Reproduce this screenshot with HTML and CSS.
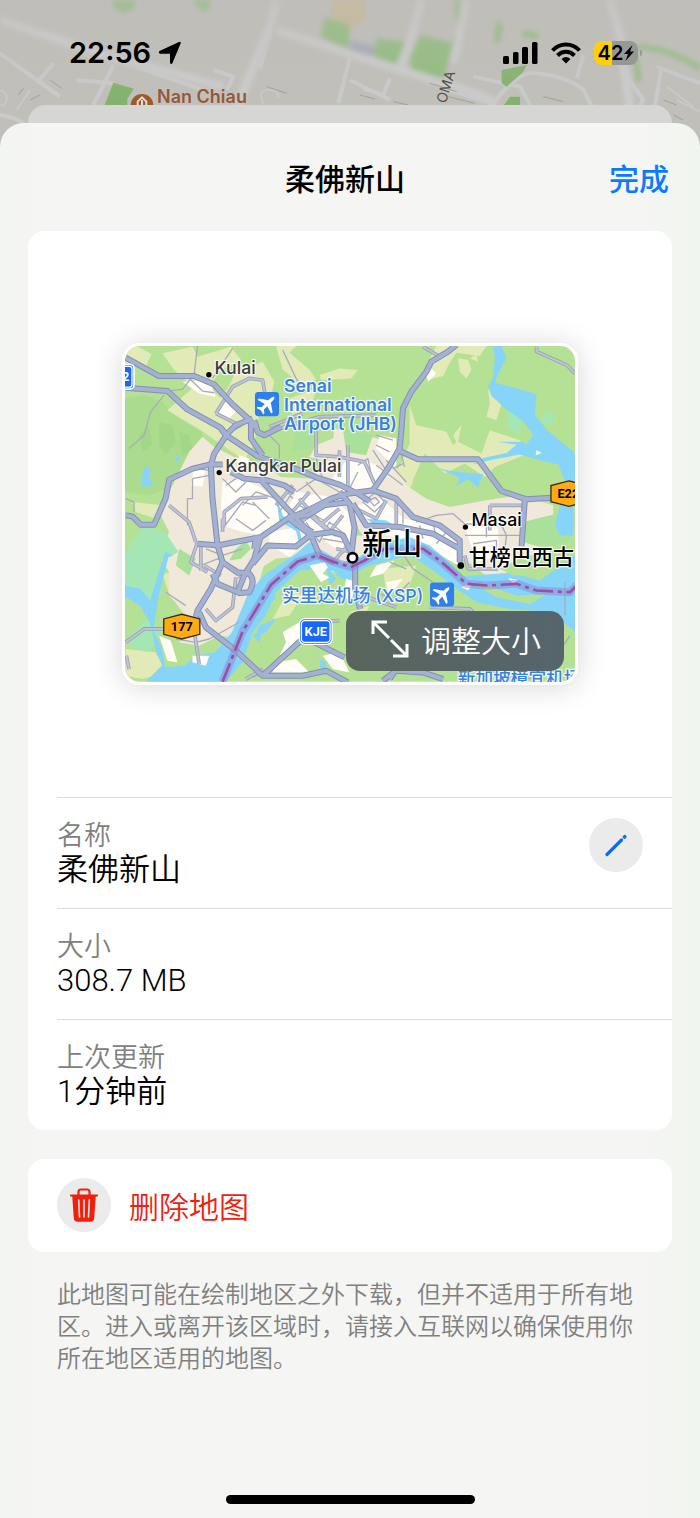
FILE: index.html
```
<!DOCTYPE html>
<html lang="zh-CN">
<head>
  <meta charset="UTF-8" />
  <meta name="viewport" content="width=device-width, initial-scale=1.0" />
  <title>柔佛新山</title>
  <link rel="stylesheet" href="styles.css">
</head>
<body>
  <!-- Map behind the sheet -->
  <svg class="backdrop" viewBox="0 0 2100 420" preserveAspectRatio="xMidYMin slice" aria-hidden="true">
    <defs>
      <filter id="soft" x="-5%" y="-5%" width="110%" height="110%"><feGaussianBlur stdDeviation="8" /></filter>
      <linearGradient id="fade" x1="0" y1="0" x2="0" y2="1">
        <stop offset="0" stop-color="#bdbcb8" stop-opacity=".45" />
        <stop offset=".75" stop-color="#bdbcb8" stop-opacity="0" />
      </linearGradient>
    </defs>
    <rect width="2100" height="420" fill="#c1bfba" />
    <g filter="url(#soft)">
      <path fill="#cbb994" d="M995 0h100v60l-50 30-50-35z" />
      <path fill="#8fbd7c" d="M975 50l75 25-5 75-85-40zM340 0h65v25l-30 15-35-15zM580 0h50v25l-25 10zM1260 105l100 25-30 115-95-30-5-40zM1130 115l85 10-20 75-75-25zM1490 60l20 15-10 50h-20zM1570 90l50 10-10 20-45-10z" />
      <path fill="#a4a9b9" d="M1050 120l80 20-20 40-60-20z" />
      <path fill="none" stroke="#8fbd7c" stroke-width="16" d="M1910 140q100 5 190 65M1370 0l10 90-25 60M1905 165l12 80" />
      <path fill="none" stroke="#cdcdce" stroke-width="24" d="M830 0l-20 80-100 240M0 60l330 110 340 90M830 90l230 75 350 110 80 35M1265 0l-30 110-35 90M1400 0l-40 190M1830 0l30 110 30 210" />
    </g>
    <g fill="none" stroke="#cacacb" stroke-width="12">
      <path d="M340 195l-60 120M0 160l180 130M160 190l-50 60M230 240l110 10M410 200l200 70M640 210l60 20-20 40M810 95l-30 110M1050 170l-35 140M1050 240l120 60M1170 235l-20 50-60-20" />
      <path d="M1330 265l150 45q60-80 110-92 100 5 160 50l25 50M1750 165l-20 70M1840 170l90 130-15 20M1985 200l-20 115M1970 200l130 50M1420 230l140 30 30 55M0 345q70 10 100 55" />
      <path stroke-width="5" d="M0 270q25 10 20 30t-20 15M790 310q-20-40 15-40t30 25M50 330l40-60M1360 230l-30 50M1860 190l20 120M2000 260l80 60M2030 300l70 35" />
    </g>
    <path fill="none" stroke="#a29f99" stroke-width="3" d="M55 285l15-20M90 300l30-15M1080 285l45 12M1180 305l45 10M1290 250l80 25M1345 290l80 20M1990 300l40 15M2020 345l30 15M150 240l35 25M800 260l60 20M1630 290l60 15" />
    <path fill="#83b26c" d="M340 248l62 18-20 30v24h-70zM1505 210l75-15-10 20-50 45-15-10zM1530 290h30v27h-50z" />
    <rect width="2100" height="420" fill="url(#fade)" />
    <circle cx="426" cy="316" r="34" fill="#9c5a2d" />
    <path fill="none" stroke="#e5ddd3" stroke-width="6" d="M413 318v-13l13-13 13 13v13M426 300v15" />
    <text class="poi" x="471" y="310">Nan Chiau</text>
    <text class="street" transform="translate(1337 312) rotate(-73)">OMA</text>
  </svg>

  <div class="status-bar">
    <div class="status-time">
      <span>22:56</span>
      <svg width="24" height="24" viewBox="0 0 24 24" aria-hidden="true"><path d="M1.500 10L21 1q2.300-.8 1.600 1.600L14.500 22q-1.300 2-2.500 0V12.800H2.200q-2.400-.9-.7-2.800z" /></svg>
    </div>
    <div class="status-icons">
      <svg width="35" height="22" viewBox="0 0 35 22" aria-hidden="true"><rect x="0" y="14" width="6" height="8" rx="1.500" /><rect x="10" y="10" width="5.500" height="12" rx="1.500" /><rect x="19" y="5" width="6" height="17" rx="1.500" /><rect x="29" y="0" width="5.500" height="22" rx="1.500" /></svg>
      <svg width="30" height="22" viewBox="0 0 30 22" aria-hidden="true">
        <path fill="none" stroke="#000" stroke-width="4" d="M1.500 8.500C9 .5 21 .5 28.500 8.500M6.500 13.500c5-5 12-5 17 0" />
        <path d="M15 21.500l-4.500-4.600q4.500-3.600 9 0z" />
      </svg>
      <span class="battery">42<svg width="10" height="16" viewBox="0 0 10 16" aria-hidden="true"><path d="M8.500 0L0 9h4L1.500 16 10 6.500H6z" /></svg></span>
    </div>
  </div>

  <main class="sheet">
    <header class="sheet-header">
      <h1>柔佛新山</h1>
      <button class="done" type="button">完成</button>
    </header>

    <section class="card">
      <div class="preview">
        <div class="map">
          <svg class="map-art" viewBox="48 33 1347 1005" preserveAspectRatio="xMidYMid slice" role="img" aria-label="柔佛新山">
            <defs>
              <g id="plane">
                <rect x="-36" y="-36" width="72" height="72" rx="10" fill="#2f80ea" />
                <path transform="rotate(45)" fill="#fff" d="M0-31q5 3 5 11v9L29 5v6L5 4v14l9 7v5L0 26l-14 4v-5l9-7V4l-24 7V5l24-16v-9q0-8 5-11z" />
              </g>
              <g id="minor">
                <path d="M265 33l-10 85M255 118l-35 45-45 5M230 120l50 48 35 5M165 180l-40 50-20 70-45 40M370 40l-40 60-20 30M520 45l40 85 30 40M510 270" />
                <path d="M480 300l30 30v40M800 300l50 15M800 330l40 20M790 345l40 60M830 375l60 65M850 400l30-15M870 340l15 55M800 390l80 60" />
                <path d="M340 430l40 40 30-30M350 450l30-20M400 510l40-40 60 20M380 550l50 35 40-30M430 500l50 50M510 530l40-60M560 470l60-40 70 40M590 440l60 70M520 450l30 40" />
                <path d="M745 390l30-20 15 70M745 410l-30 60M620 370l20 60M760 500l40-30 25 30-30 30zM780 495l17-9 12 14-15 12zM880 505v60M865 490l-5 75" />
                <path d="M590 560l40 60 30-60 50 40M610 530l70-30M640 610l60 10M570 510l80 50M920 560l60-20 50-5 40 35M930 570l10 40M970 560l10 50M1010 590l-30 35M1070 565l70 5M1065 600h105M1090 625l70-10v50M1130 575v30M1170 560l20 40-5 40M1170 600h65" />
                <path d="M250 430v60h-15v80M50 490l25 10v30M260 400l40 5M250 430l50-10M290 640l50 20 60-20M275 690l50-20 60 30M230 810l-60-40M200 910l60 10 40-10 90-50M460 1010l-30 15M340 580l60-80 40 10" />
                <path d="M870 640l40 60 60 40M900 740l-60 60M800 770l70 30M840 680l50 20M1100 970l60-60M1320 990l60-90M1365 740v100" />
              </g>
              <g id="mid">
                <path d="M390 730l60-80M345 570v-40l50-40 80-5M340 590v-40M620 270v90l70 5 75 15 30 65M690 345v80M715 330v130M550 450l-50 60M570 490l60 70 50 40M600 470l-60 70M655 500l-100 75M590 530l70 60 40-50M690 520l-60 50M740 520l60 30 30-55" />
                <path d="M180 510l60 50 20 60M265 620l-20 60 50 30M275 625v80M285 690l50 30M680 640l50 10M675 675l40-45M1140 510h100M1140 510v75M1065 660l10 40h90M860 490v75M940 35l50 30M1280 35v15l90 40 25 25" />
                <path d="M50 920l55-40h60M255 885l15 100M290 820l30 35 50-40 10-90M600 860l90-5M740 770l60 25 60 20M960 815l120 5 20 20M60 1000l-8-40M410 1030l50-30M1090 980l90 50 120-10" />
                <path d="M375 280l20-10M320 235l50-80 50-25 40 5 10 60M320 235l60 30M510 280l120-35 170-5M480 275l100-40" />
              </g>
              <g id="major">
                <path d="M50 68l100 55h105l60 25 55 60 50 45 15 25" />
                <path d="M50 158l125 10 60 55 100 55 20 25 90 60 60 20 60 20 60 25 65 20 60 30 30 20" />
                <path d="M355 295l-40 60-10 35 5 100 15 140 15 50-35 80-40 65-5 20" />
                <path d="M335 280l15 20 30-30 50-20M425 260v50l35 50M435 255l10 35 20 10 50-25" />
                <path d="M340 388h-40l-50 12-70 33-10 55-35 80H95l-25-25-20-3" />
                <path d="M365 410l40 20 50 5 65 70 70 75 20 10M455 430l70 20 30 20" />
                <path d="M325 630l60-12 70-13 80-55 60-25 70-35 50-15 75-10 45-65 35-60 5-50 5-70 25-50 45-60 15-30 50-30 25-20" />
                <path d="M865 345l60 27h180l70 95 75 25 75-5M1245 492l-10 140" />
                <path d="M690 470l30 35 15 70-10 90M730 505l40 65 100 5 100 20 80 45M720 500l-75 10-50 30-60 5M790 465l70 25 50 55 80 25 60 45v65" />
                <path d="M265 625l40 3 20 2M455 600l-20 70-30 50-20 50-60-25-15-30M385 710l35 5q20 20 0 55l-35 3M340 680l50 35M440 600l-5 40" />
                <path d="M430 685l45-55 85 3 45-35 65-8 30 10 25 50M540 550l65 50 25 60 45 20" />
                <path d="M270 830l20 45 90 70 80 75h120l70-15 65 35M460 1020l125-115 120 60M737 680v80l15 60M1000 1030l-60-20-80-5-40 30M840 1030l20-30" />
              </g>
            </defs>

            <!-- land -->
            <rect x="48" y="33" width="1347" height="1005" fill="#b4e193" />
            <path fill="#abdc8e" d="M48 190l60-10 50 20 50 50 70 40 10 60-50 60-60 50-60 20-70-10z" />
            <path fill="#a3d687" d="M150 260l40 10 10 50-30 40-20-30zM90 300l30-30 10 60-30 20zM210 290l30 10 10 40-30 20z" />
            <g fill="#e2ebb8">
              <path d="M48 33h35l45 25-20 40-60-15zM160 55l90-20 15 30 100-30 30 40-60 30-35 50 70 70 80 10-15 90-30 50-130-90-100-60 80-70-60-50z" />
              <path d="M380 110l80-30 35 60-20 90-80 20-80-40 40-50zM500 33h60l-20 20 60 50 20 30-40 20-60-50zM630 120l60-20 55 5-20 25-90 5zM540 190l80-30-10 40-60 40zM980 33h150l-20 30-70-10-20 30-20 40-40 10-20-20zM1045 70l30 5 10 30-15 25-20-20z" />
              <path d="M900 210l20 60 90 20 20 40 10-10-10-20 25-30-10 50 70 35 25-70 90 30 25 40-100 40-30 30-60-40-60 30-60-60-40 90-45-30 40-90zM1135 165h50l30 50-40-10-15 50-30-10 10-40zM800 440l80-50 30 50-30 60-60-10z" />
              <path d="M200 600l80 20-10 130-80-20zM160 715l100-10-10 60 60 60-80 20-50-70zM50 940l90 10 30 60-70 20-52-10zM70 500l90 10-20 40-60-20zM820 700l100-10-20 60-70 20zM1080 70l20-10 5 20z" />
              <path d="M720 830l60-20-20 40zM540 760l40 20-40 60-50 10zM170 480l60 20 20 60-60-10z" />
            </g>
            <g fill="#f0e9da">
              <path d="M240 350l40-45 35 30 60 30 80 20 60 40 90 5 60-70 10-80 130 30 50 40 5 50 30 50 60 40 70 25 110-20 100-15 100 30v50l-30 10 20 80-60 10-40 50-80 20-50-40-90-55-110-20-90-5-50 80-80 20-80-50-90 10-50 30-30 80-10 130-80-10-60 30-60-10 20-90-50-50v-70l-30-50 30-70-30-60z" />
              <path d="M620 330l50-20 10 35-40 30-40-10zM360 700l110-30-30 100-60 80-100-30 20-80z" />
            </g>
            <g fill="#fffdf6">
              <path d="M340 440l60-10 60 30 60 60 20 30-80 50-60-10-60-20-5-60zM220 140l80-5 20 50-50-10zM340 190l50 30-30 30-35-20zM560 470l110 15 50 50 10 110-60-10-60-50-70-10-20-30zM720 365l70 20 50 30-50 50-90 10-30-50zM810 300l50 10v90l-60-60z" />
              <path d="M745 510l70-20 70 60 100 20 60 60v60l-100-60-110-30-70-20zM1060 560l100-20 10 120-70 20zM870 570l50 25 120 30-90-10zM480 590l90-15 30 30-60 60-60-40zM965 100l15 15-25 25-5-20zM255 400l35-5-10 60-35-5zM390 360l30 10v20l-35-10z" />
            </g>
            <g fill="#aae19a">
              <path d="M380 640l30-25 15 25-30 30-35 5zM210 640l50 30-20 50-40-30zM700 280l90 20-20 60-60-10zM560 290l50-10-5 60-60 10zM730 600l10-30 20 30z" />
              <path d="M1240 560l120-30 25 80-80 30-65-20z" />
            </g>
            <path fill="#a5e7b4" d="M48 650l60-80 60 20 40 60-60 30 10 100-50 40-60-40zM1190 230l50 10-10 60-35-20zM1310 230l30 10-20 30-30-10zM60 900l50-50 50 30-40 70-50-10z" />

            <!-- water -->
            <g fill="#86d5f8">
              <path d="M1150 33h25l15 35-25 50-10 25 60 15 65 20-5 60 35 45 60 50 25 20v115l-25-20-25-60-45-10-70-20 40-60-30-40-50-35-45-40-10-30 15-25 5-60z" />
              <path d="M1240 320l-80 0 60 8-30 25-70 15-30 20 60-15 80-15 30-20zM980 397l40 10 100 10-15 40-30-25-35 20 10-25-70-30zM105 395l20 5-5 30 15 20-40 5zM205 350l10 30-15-5z" />
              <path d="M48 750l45 10 30 35 45-145 25 10-15 5-30 120-15 100 25 50 10 60 60-5 30-30 60-10L368 890 418 770 470 715 560 655 600 620 630 640 700 680 750 665 785 630 900 605 960 630 1030 690 1060 722 1200 712 1290 735 1350 690 1395 660V880L1330 830 1200 820 1100 800 1040 760 990 720 950 690 900 660 780 690 720 720 640 700 570 705 500 770 470 840 430 890 400 980 350 1038H110l50-50-20-40-10-60-10-30-25-45-47-30z" />
              <path d="M1390 420v180h-40l-15-30 20-80zM500 480l20 60 50 40 10 50-10-3-10-40-50-30zM770 550l60 5 20 12-60-3zM690 700l40 10-10 30-40-20zM650 690l30 40-20 20zM630 970l20 10v40l-15-10zM450 870l50-20-30 40-30 10zM590 750l30 20-10 20zM480 770l20 15-20 25-15-20zM430 900l30-20-10 40zM800 780l30 20-20 15zM1340 760h55v130l-45-40z" />
            </g>
            <g fill="#b4e193">
              <path d="M1080 738l80 22 60 20 90-5-50 30-100-20zM1170 700l60-30 80 15 10 30-110 5zM165 960l15 30 30-20-15-60z" />
            </g>
            <g fill="#fffdf6">
              <path d="M600 690l45-10 10 15-15 20 20 10-25 15-20-30zM800 690l55-15-35 40-40 10zM830 740l50-10-40 50zM520 890l50-30 20 20-30 50-50 30 20-40zM640 960l50-10 30 60-50-10zM710 730l30 10-15 60-25-20zM1280 345l15 8-18 7zM1090 740l-15 25-20-10zM1195 728l30 5-15 12z" />
              <path d="M150 900l35 15 20 65-30-5zM250 960l50 0-10 30-40-10zM500 980l60-10 40 40H490z" />
            </g>

            <!-- roads: casing below, fill above -->
            <use href="#minor" class="road minor" />
            <use href="#mid" class="road mid-case" />
            <use href="#mid" class="road mid-fill" />
            <use href="#major" class="road major-case" />
            <use href="#major" class="road major-fill" />

            <!-- border -->
            <g class="border">
              <path class="border-glow" d="M340 1038l60-150 85-140 80-70 60-18 50 20 50 15 40-20 60-35 115 0 50 35 80 70 60 5 90-5 60 20 100 5 60-60" />
              <path class="border-line" d="M340 1038l60-150 85-140 80-70 60-18 50 20 50 15 40-20 60-35 115 0 50 35 80 70 60 5 90-5 60 20 100 5 60-60" />
            </g>

            <!-- badges -->
            <rect x="8" y="88" width="67" height="74" rx="12" fill="#1769f5" stroke="#fff" stroke-width="5" />
            <rect x="14" y="94" width="55" height="62" rx="8" fill="none" stroke="#fff" stroke-width="4" />
            <text class="shield" x="50" y="139" fill="#fff">2</text>
            <path class="route" d="M218 836l54 14v46l-54 14-54-14v-46z" />
            <text class="shield" x="218" y="886">177</text>
            <path class="route" d="M1377 437l54 14v48l-54 14-54-14v-48z" />
            <text class="shield" x="1375" y="489">E22</text>
            <rect x="570" y="849" width="98" height="77" rx="16" fill="#1769f5" stroke="#fff" stroke-width="4" />
            <rect x="576" y="855" width="86" height="65" rx="11" fill="none" stroke="#fff" stroke-width="4" />
            <text class="shield" x="619" y="901" fill="#fff">KJE</text>
            <use href="#plane" x="473" y="207" />
            <use href="#plane" x="997" y="777" />

            <!-- places -->
            <g>
              <circle cx="299" cy="119" r="8" />
              <circle cx="330" cy="412" r="8" />
              <circle cx="1067" cy="575" r="8" />
              <circle cx="1053" cy="690" r="10" />
              <circle cx="729" cy="667" r="14" fill="#fff" stroke="#000" stroke-width="8" />
            </g>
            <text class="place" x="316" y="116">Kulai</text>
            <text class="place" x="348" y="410">Kangkar Pulai</text>
            <text class="place dark" x="1085" y="572">Masai</text>
            <text class="place dark town" x="1077" y="688">甘榜巴西古</text>
            <text class="place dark city" x="758" y="656">新山</text>
            <text class="airport" x="524" y="170">Senai</text>
            <text class="airport" x="524" y="227">International</text>
            <text class="airport" x="524" y="283">Airport (JHB)</text>
            <text class="airport zh" x="518" y="799">实里达机场 (XSP)</text>
            <text class="airport zh" x="1044" y="1049">新加坡樟宜机场</text>
          </svg>
          <button class="resize" type="button">
            <svg width="38" height="38" viewBox="0 0 38 38" aria-hidden="true"><path d="M2 14V2h14M2 2l16 16M36 24v12H22M36 36L20 20" /></svg>
            调整大小
          </button>
        </div>
      </div>

      <dl class="details">
        <div class="row">
          <div>
            <dt>名称</dt>
            <dd>柔佛新山</dd>
          </div>
          <button class="round" type="button" aria-label="编辑名称">
            <svg width="24" height="24" viewBox="0 0 24 24" aria-hidden="true"><path d="M3 21.500L17.500 7" stroke="#0a6cf0" stroke-width="3.200" stroke-linecap="round" /><path d="M20.500 4l.3-.3" stroke="#0a6cf0" stroke-width="3.600" stroke-linecap="round" /></svg>
          </button>
        </div>
        <div class="row">
          <div>
            <dt>大小</dt>
            <dd>308.7 MB</dd>
          </div>
        </div>
        <div class="row">
          <div>
            <dt>上次更新</dt>
            <dd>1分钟前</dd>
          </div>
        </div>
      </dl>
    </section>

    <button class="card delete" type="button">
      <span class="round">
        <svg width="30" height="34" viewBox="0 0 30 34" fill="none" stroke="#f0200f" aria-hidden="true"><path stroke-width="2.200" stroke-linecap="round" d="M2 7.500h26M9.500 7V4q0-2.500 2.500-2.500h6q2.500 0 2.500 2.500v3" /><path fill="#f0200f" stroke-width="1.500" stroke-linejoin="round" d="M4 8h22l-1.500 22q-.2 3-3 3h-13q-2.800 0-3-3z" /><path stroke="#f3e3e1" stroke-width="1.600" stroke-linecap="round" d="M9.700 12l.8 17M15 12v17M20.300 12l-.8 17" /></svg>
      </span>
      删除地图
    </button>

    <p class="note">此地图可能在绘制地区之外下载，但并不适用于所有地区。进入或离开该区域时，请接入互联网以确保使用你所在地区适用的地图。</p>

    <div class="home-indicator"></div>
  </main>
</body>
</html>
```

FILE: styles.css
```
* { margin: 0; padding: 0; box-sizing: border-box; }
html, body { height: 100%; }
body {
  position: relative;
  display: flex;
  flex-direction: column;
  font-family: Inter, 'Noto Sans CJK SC', sans-serif;
  color: #000;
  background: #bfbdb8;
}
button {
  border: 0;
  background: none;
  font: inherit;
  cursor: pointer;
}
svg { display: block; }

/* Map behind everything */
.backdrop {
  position: absolute;
  z-index: -2;
  top: 0;
  left: 0;
  width: 100%;
  height: 140px;
}
.poi {
  font-size: 54px;
  font-weight: 600;
  fill: #93583b;
  stroke: #c9c4be;
  stroke-width: 5px;
  paint-order: stroke;
}
.street {
  font-size: 42px;
  fill: #55534f;
}

/* Status bar */
.status-bar {
  display: flex;
  justify-content: space-between;
  align-items: center;
  height: 105px;
  padding: 0 62px 0 69px;
}
.status-time {
  display: flex;
  align-items: center;
  gap: 7px;
  font-size: 29px;
  font-weight: 600;
}
.status-icons {
  display: flex;
  align-items: center;
  gap: 13px;
}
.battery {
  position: relative;
  display: flex;
  align-items: center;
  justify-content: center;
  gap: 1px;
  width: 44px;
  height: 24px;
  border-radius: 8px;
  background: linear-gradient(90deg, #fdd00b 42%, #979795 42%);
  font-size: 20px;
  font-weight: 600;
}
.battery::after {
  content: '';
  position: absolute;
  right: -4px;
  width: 2px;
  height: 6px;
  border-radius: 0 2px 2px 0;
  background: #979795;
}

/* Sheet */
.sheet {
  position: relative;
  flex: 1 0 auto;
  display: flex;
  flex-direction: column;
  margin-top: 18px;
  padding: 0 28px 14px;
  border-radius: 24px 24px 0 0;
  background: linear-gradient(90deg, #f3f5f2, #f5f5f3 6%, #f5f5f3 92%, #f0f5ef);
}
.sheet::before {
  content: '';
  position: absolute;
  z-index: -1;
  top: -18px;
  left: 28px;
  right: 28px;
  height: 36px;
  border-radius: 18px 18px 0 0;
  background: #d6d6d4;
}
.sheet-header {
  display: grid;
  grid-template-columns: 1fr auto 1fr;
  align-items: center;
  height: 108px;
  margin: 0 -28px;
  padding: 0 31px 0 21px;
}
.sheet-header h1 {
  grid-column: 2;
  font-size: 30px;
  font-weight: 500;
}
.done {
  justify-self: end;
  color: #0a7aff;
  font-size: 30px;
  font-weight: 500;
}

.card {
  border-radius: 16px;
  background: #fff;
}

/* Map preview */
.preview {
  padding: 112px 94px;
}
.map {
  position: relative;
  border: 3px solid #fff;
  border-radius: 18px;
  box-shadow: 0 2px 30px rgba(0,0,0,0.16);
}
.map-art {
  width: 100%;
  border-radius: 15px;
}
.road {
  fill: none;
  stroke-linejoin: round;
}
.minor { stroke: #a9abbd; stroke-width: 4px; }
.mid-case { stroke: #9b9fb5; stroke-width: 11px; }
.mid-fill { stroke: #bfc3d6; stroke-width: 6px; }
.major-case { stroke: #8290b3; stroke-width: 18px; }
.major-fill { stroke: #a5b1d2; stroke-width: 12px; }
.border {
  fill: none;
  stroke-linejoin: round;
}
.border-glow { stroke: #8c7fd2; stroke-width: 24px; stroke-opacity: 0.45; }
.border-line { stroke: #a04ba8; stroke-width: 8px; stroke-dasharray: 60 14 12 14; }
.route { fill: #fdaa14; stroke: #3b2d12; stroke-width: 4px; }
.shield {
  font-family: Roboto, sans-serif;
  font-size: 38px;
  font-weight: 700;
  text-anchor: middle;
}
.place, .airport {
  font-size: 53px;
  font-weight: 500;
  fill: #3c3c3c;
  stroke: #fff;
  stroke-width: 7px;
  stroke-opacity: 0.85;
  stroke-linejoin: round;
  paint-order: stroke;
}
.dark { fill: #000; }
.town { font-size: 63px; }
.city { font-size: 90px; }
.airport {
  font-weight: 600;
  fill: #3682e0;
}
.zh { font-weight: 500; }
.resize {
  position: absolute;
  right: 11px;
  bottom: 11px;
  display: flex;
  align-items: center;
  gap: 12px;
  height: 60px;
  padding: 0 23px 4px 25px;
  border-radius: 14px;
  background: linear-gradient(90deg, #59655c, #56646d);
  color: #fff;
  font-size: 30px;
  font-weight: 350;
}
.resize svg {
  fill: none;
  stroke: #fff;
  stroke-width: 3px;
}

/* Details */
.row {
  display: flex;
  justify-content: space-between;
  align-items: center;
  margin-left: 29px;
  padding: 20px 29px 21px 0;
  border-top: 1px solid #dcdcdc;
}
.row dt {
  color: #808080;
  font-size: 27px;
  font-weight: 350;
  line-height: 35px;
}
.row dd {
  font-family: Roboto, 'Noto Sans CJK SC', sans-serif;
  font-size: 31px;
  font-weight: 350;
  line-height: 34px;
}
.round {
  display: flex;
  align-items: center;
  justify-content: center;
  width: 54px;
  height: 54px;
  border-radius: 50%;
  background: #ebebeb;
}
.row .round { margin-bottom: 14px; }

.delete {
  display: flex;
  align-items: center;
  gap: 18px;
  margin-top: 29px;
  padding: 19px 29px 20px;
  color: #f0200f;
  font-size: 30px;
  font-weight: 350;
}

.note {
  padding: 27px 29px;
  color: #808080;
  font-size: 24px;
  font-weight: 350;
  line-height: 32px;
}

.home-indicator {
  width: 249px;
  height: 9px;
  margin: auto auto 0;
  border-radius: 5px;
  background: #000;
}
```
